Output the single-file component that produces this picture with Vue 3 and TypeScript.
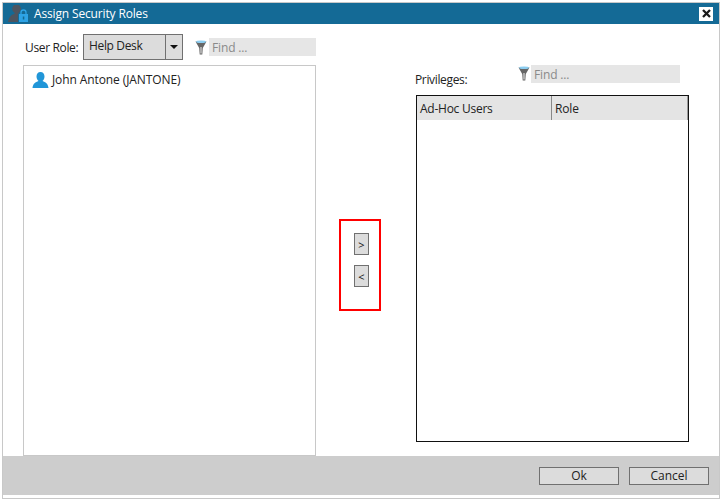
<script setup lang="ts">
const title = 'Assign Security Roles'
const user = 'John Antone (JANTONE)'
</script>

<template>
  <div class="window">
    <header class="titlebar">
      <svg class="title-icon" width="22" height="17" viewBox="0 0 22 17">
        <path fill="#4d5560" d="M8 8 A4.300 4.500 0 1 1 13 6.500 L11 9 L11 17 H1 C1.500 13 3.500 10 7 9 Z" />
        <path fill="none" stroke="#2ea3e6" stroke-width="1.300" d="M14 9 V7.500 A2.500 2.500 0 0 1 19 7.500 V9" />
        <rect x="12" y="9" width="9" height="8" fill="#2ea3e6" />
        <rect x="15.800" y="11.500" width="1.500" height="3" fill="#13698f" />
      </svg>
      <span class="title-text">{{ title }}</span>
      <span class="close">
        <svg width="9" height="9" viewBox="0 0 9 9"><path d="M1 1 L8 8 M8 1 L1 8" stroke="#1a1a1a" stroke-width="2.300" /></svg>
      </span>
    </header>

    <main class="content">
      <section class="left">
        <div class="left-toolbar">
          <label class="role-label">User Role:</label>
          <div class="combo">
            <span class="combo-value">Help Desk</span>
            <span class="combo-arrow"></span>
          </div>
          <svg class="funnel" width="12" height="15" viewBox="0 0 12 15">
            <path fill="#666" d="M0.500 1.500 H11.500 L7.800 8 L7.300 14.500 H4.700 L4.200 8 Z" />
            <path fill="#f2f2f2" d="M5.500 7 H6.500 V13.500 H5.500 Z" />
            <ellipse cx="6" cy="1.700" rx="5" ry="1.300" fill="#8ccdf0" />
          </svg>
          <div class="find find-left">Find ...</div>
        </div>
        <div class="user-list">
          <div class="user-row">
            <svg width="17" height="16" viewBox="0 0 17 16">
              <path fill="#2196d8" d="M8.500 0 C11 0 12.500 2 12.500 4.500 C12.500 6.500 11.500 8 10.500 9 C13.500 10 16 11.500 16.500 16 H0.500 C1 11.500 3.500 10 6.500 9 C5.500 8 4.500 6.500 4.500 4.500 C4.500 2 6 0 8.500 0 Z" />
            </svg>
            <span>{{ user }}</span>
          </div>
        </div>
      </section>

      <section class="transfer">
        <button class="move">&gt;</button>
        <button class="move">&lt;</button>
      </section>

      <section class="right">
        <div class="right-toolbar">
          <label class="priv-label">Privileges:</label>
          <svg class="funnel" width="12" height="15" viewBox="0 0 12 15">
            <path fill="#666" d="M0.500 1.500 H11.500 L7.800 8 L7.300 14.500 H4.700 L4.200 8 Z" />
            <path fill="#f2f2f2" d="M5.500 7 H6.500 V13.500 H5.500 Z" />
            <ellipse cx="6" cy="1.700" rx="5" ry="1.300" fill="#8ccdf0" />
          </svg>
          <div class="find find-right">Find ...</div>
        </div>
        <div class="grid">
          <div class="grid-head">
            <div class="col col-user">Ad-Hoc Users</div>
            <div class="col col-role">Role</div>
          </div>
        </div>
      </section>
    </main>

    <footer class="footer">
      <button class="action">Ok</button>
      <button class="action">Cancel</button>
    </footer>
  </div>
</template>

<style>
html, body { margin: 0; background: #fff; }
</style>

<style scoped>
.window {
  box-sizing: border-box;
  width: 718px;
  height: 497px;
  margin: 2px 0 0 2px;
  border: 1px solid #c8c8c8;
  display: flex;
  flex-direction: column;
  background: #fff;
  font-family: "Open Sans", "Noto Sans", sans-serif;
  font-size: 12px;
  letter-spacing: -0.15px;
  color: #222;
}
.titlebar {
  height: 21px;
  flex: none;
  background: #146a96;
  display: flex;
  align-items: center;
  color: #fff;
}
.title-icon { margin-left: 4px; flex: none; }
.title-text { margin-left: 5px; }
.close {
  margin-left: auto;
  margin-right: 6px;
  width: 14px;
  height: 14px;
  background: #fff;
  display: flex;
  align-items: center;
  justify-content: center;
}
.content {
  flex: 1;
  min-height: 0;
  display: flex;
}
.left {
  width: 293px;
  margin-left: 20px;
  display: flex;
  flex-direction: column;
}
.left-toolbar {
  height: 41px;
  flex: none;
  display: flex;
  align-items: flex-start;
}
.role-label { margin: 15px 0 0 2px; width: 58px; flex: none; letter-spacing: -0.35px; }
.combo {
  box-sizing: border-box;
  width: 100px;
  height: 26px;
  margin-top: 10px;
  border: 1px solid #707070;
  background: #dcdcdc;
  display: flex;
  flex: none;
}
.combo-value { flex: 1; padding: 2px 0 0 5px; letter-spacing: -0.35px; }
.combo-arrow {
  width: 16px;
  border-left: 1px solid #707070;
  position: relative;
}
.combo-arrow::after {
  content: "";
  position: absolute;
  left: 4px;
  top: 10px;
  border-left: 4px solid transparent;
  border-right: 4px solid transparent;
  border-top: 4px solid #111;
}
.funnel { flex: none; }
.left-toolbar .funnel { margin: 16px 0 0 12px; }
.find {
  box-sizing: border-box;
  height: 18px;
  background: #e6e6e6;
  color: #8a8a8a;
  padding-left: 3px;
  line-height: 19px;
}
.find-left { width: 107px; margin: 14px 0 0 2px; flex: none; }
.user-list {
  flex: 1;
  border: 1px solid #c8c8c8;
  box-sizing: border-box;
}
.user-row {
  display: flex;
  align-items: center;
  gap: 3px;
  margin: 5px 0 0 8px;
  height: 17px;
  color: #222;
  letter-spacing: -0.1px;
}
.transfer {
  box-sizing: border-box;
  width: 42px;
  height: 92px;
  margin: 195px 0 0 23px;
  border: 2px solid #f00;
  display: flex;
  flex-direction: column;
  align-items: flex-start;
  gap: 10px;
  padding: 12px 0 0 13px;
  flex: none;
}
.move {
  box-sizing: border-box;
  width: 15px;
  height: 22px;
  padding: 0;
  border: 1px solid #707070;
  background: #dcdcdc;
  font: inherit;
  font-size: 11px;
  color: #111;
}
.right {
  margin-left: 34px;
  width: 274px;
  flex: none;
}
.right-toolbar {
  height: 71px;
  display: flex;
  align-items: flex-start;
}
.priv-label { margin: 47px 0 0 0; width: 103px; flex: none; letter-spacing: -0.35px; }
.right-toolbar .funnel { margin: 42px 0 0 0; }
.find-right { width: 149px; margin: 41px 0 0 1px; }
.grid {
  box-sizing: border-box;
  width: 273px;
  height: 347px;
  margin-left: 1px;
  border: 1px solid #111;
}
.grid-head {
  height: 24px;
  display: flex;
  background: #e4e4e4;
  border-right: 1px solid #999;
}
.col { line-height: 26px; padding-left: 3px; box-sizing: border-box; }
.col-user { width: 135px; border-right: 1px solid #888; letter-spacing: -0.25px; }
.col-role { flex: 1; }
.footer {
  height: 39px;
  flex: none;
  background: #cdcdcd;
  margin-bottom: 3px;
  display: flex;
  justify-content: flex-end;
  align-items: center;
  gap: 10px;
  padding-right: 10px;
}
.action {
  box-sizing: border-box;
  width: 80px;
  height: 18px;
  padding: 0;
  border: 1px solid #707070;
  background: #dcdcdc;
  font: inherit;
  line-height: 16px;
  color: #222;
}
</style>
